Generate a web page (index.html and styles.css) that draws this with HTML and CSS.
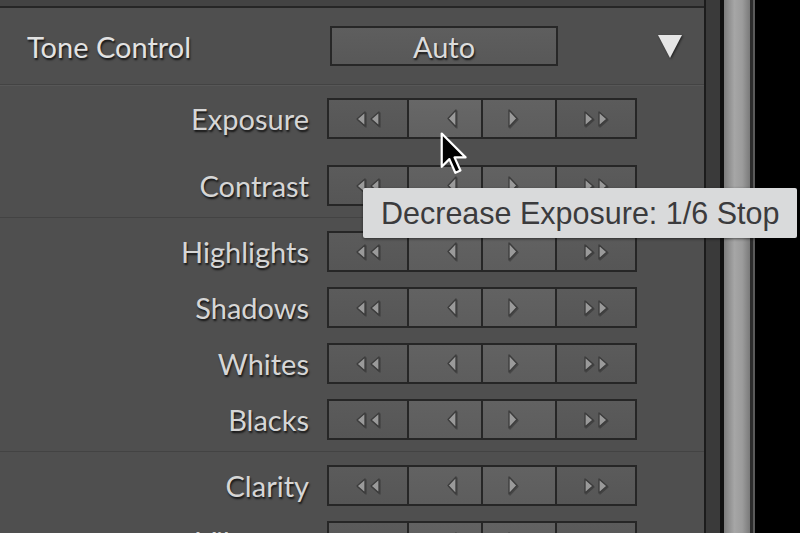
FILE: index.html
```html
<!DOCTYPE html>
<html lang="en">
<head>
    <meta charset="UTF-8" />
    <meta name="viewport" content="width=device-width, initial-scale=1.0" />
    <title>Tone Control</title>
    <link rel="stylesheet" href="styles.css">
</head>
<body>
    <svg class="defs" width="0" height="0">
        <symbol id="ico-ll" viewBox="0 0 28 16">
            <polygon points="11,1 11,15 3,8" />
            <polygon points="25,1 25,15 17,8" />
        </symbol>
        <symbol id="ico-l" viewBox="0 0 13 19">
            <polygon points="11,1 11,18 3,9.5" />
        </symbol>
        <symbol id="ico-r" viewBox="0 0 13 19">
            <polygon points="2,1 2,18 10,9.5" />
        </symbol>
        <symbol id="ico-rr" viewBox="0 0 28 16">
            <polygon points="3,1 3,15 11,8" />
            <polygon points="17,1 17,15 25,8" />
        </symbol>
    </svg>

    <div class="screen">
        <div class="panel">
            <div class="panel-top"></div>
            <div class="panel-head">
                <h2 class="panel-title">Tone Control</h2>
                <button class="auto-btn">Auto</button>
                <svg class="collapse" viewBox="0 0 26 25" width="26" height="25">
                    <polygon points="1,1 25,1 13,24" />
                </svg>
            </div>

            <div class="group">
                <div class="row">
                    <span class="label">Exposure</span>
                    <div class="steps">
                        <button class="step step-big"><svg width="28" height="16"><use href="#ico-ll"/></svg></button>
                        <button class="step step-dec hover"><svg width="13" height="19"><use href="#ico-l"/></svg></button>
                        <button class="step step-inc"><svg width="13" height="19"><use href="#ico-r"/></svg></button>
                        <button class="step step-big"><svg width="28" height="16"><use href="#ico-rr"/></svg></button>
                    </div>
                </div>
                <div class="row row-spaced">
                    <span class="label">Contrast</span>
                    <div class="steps">
                        <button class="step step-big"><svg width="28" height="16"><use href="#ico-ll"/></svg></button>
                        <button class="step step-dec"><svg width="13" height="19"><use href="#ico-l"/></svg></button>
                        <button class="step step-inc"><svg width="13" height="19"><use href="#ico-r"/></svg></button>
                        <button class="step step-big"><svg width="28" height="16"><use href="#ico-rr"/></svg></button>
                    </div>
                </div>
            </div>

            <div class="group">
                <div class="row">
                    <span class="label">Highlights</span>
                    <div class="steps">
                        <button class="step step-big"><svg width="28" height="16"><use href="#ico-ll"/></svg></button>
                        <button class="step step-dec"><svg width="13" height="19"><use href="#ico-l"/></svg></button>
                        <button class="step step-inc"><svg width="13" height="19"><use href="#ico-r"/></svg></button>
                        <button class="step step-big"><svg width="28" height="16"><use href="#ico-rr"/></svg></button>
                    </div>
                </div>
                <div class="row">
                    <span class="label">Shadows</span>
                    <div class="steps">
                        <button class="step step-big"><svg width="28" height="16"><use href="#ico-ll"/></svg></button>
                        <button class="step step-dec"><svg width="13" height="19"><use href="#ico-l"/></svg></button>
                        <button class="step step-inc"><svg width="13" height="19"><use href="#ico-r"/></svg></button>
                        <button class="step step-big"><svg width="28" height="16"><use href="#ico-rr"/></svg></button>
                    </div>
                </div>
                <div class="row">
                    <span class="label">Whites</span>
                    <div class="steps">
                        <button class="step step-big"><svg width="28" height="16"><use href="#ico-ll"/></svg></button>
                        <button class="step step-dec"><svg width="13" height="19"><use href="#ico-l"/></svg></button>
                        <button class="step step-inc"><svg width="13" height="19"><use href="#ico-r"/></svg></button>
                        <button class="step step-big"><svg width="28" height="16"><use href="#ico-rr"/></svg></button>
                    </div>
                </div>
                <div class="row">
                    <span class="label">Blacks</span>
                    <div class="steps">
                        <button class="step step-big"><svg width="28" height="16"><use href="#ico-ll"/></svg></button>
                        <button class="step step-dec"><svg width="13" height="19"><use href="#ico-l"/></svg></button>
                        <button class="step step-inc"><svg width="13" height="19"><use href="#ico-r"/></svg></button>
                        <button class="step step-big"><svg width="28" height="16"><use href="#ico-rr"/></svg></button>
                    </div>
                </div>
            </div>

            <div class="group">
                <div class="row">
                    <span class="label">Clarity</span>
                    <div class="steps">
                        <button class="step step-big"><svg width="28" height="16"><use href="#ico-ll"/></svg></button>
                        <button class="step step-dec"><svg width="13" height="19"><use href="#ico-l"/></svg></button>
                        <button class="step step-inc"><svg width="13" height="19"><use href="#ico-r"/></svg></button>
                        <button class="step step-big"><svg width="28" height="16"><use href="#ico-rr"/></svg></button>
                    </div>
                </div>
                <div class="row">
                    <span class="label">Vibrance</span>
                    <div class="steps">
                        <button class="step step-big"><svg width="28" height="16"><use href="#ico-ll"/></svg></button>
                        <button class="step step-dec"><svg width="13" height="19"><use href="#ico-l"/></svg></button>
                        <button class="step step-inc"><svg width="13" height="19"><use href="#ico-r"/></svg></button>
                        <button class="step step-big"><svg width="28" height="16"><use href="#ico-rr"/></svg></button>
                    </div>
                </div>
            </div>
        </div>
        <div class="rail"></div>
        <div class="scrollbar"></div>
        <div class="gutter"></div>

        <div class="tooltip">Decrease Exposure: 1/6 Stop</div>
        <svg class="pointer" viewBox="0 0 18 27" width="31" height="46">
            <polygon points="1.5,1.5 1.5,21 6,16.5 9.5,24.5 12.5,23.2 9,15.5 15.5,15.5" />
        </svg>
    </div>
</body>
</html>
```

FILE: styles.css
```css
* {
    margin: 0;
    box-sizing: border-box;
}
body {
    background: #000;
    overflow: hidden;
}
.defs {
    position: absolute;
}
.screen {
    position: relative;
    display: flex;
    width: 800px;
    height: 533px;
    overflow: hidden;
    background: #000;
}
.panel {
    width: 706px;
    flex-shrink: 0;
    background: #4f4f4f;
    border-right: 2px solid #1c1c1c;
    font-family: "Lato", sans-serif;
}
.panel-top {
    height: 8px;
    background: #434343;
    border-bottom: 2px solid #262626;
}
.panel-head {
    display: flex;
    align-items: center;
    height: 77px;
    padding-left: 27px;
    border-bottom: 1px solid #434343;
    box-shadow: 0 1px 0 #575757;
}
.panel-title {
    width: 303px;
    font-size: 29px;
    font-weight: normal;
    color: #e2e2e2;
    text-shadow: 1px 2px 2px rgba(0, 0, 0, 0.75);
}
.auto-btn {
    width: 228px;
    height: 40px;
    border: 2px solid #272727;
    background: linear-gradient(#5e5e5e, #585858);
    font-family: "Lato", sans-serif;
    font-size: 29px;
    color: #dcdcdc;
    text-shadow: 1px 2px 2px rgba(0, 0, 0, 0.75);
}
.collapse {
    margin-left: 99px;
    fill: #e6e6e6;
    filter: drop-shadow(1px 1px 1px rgba(0, 0, 0, 0.6));
}
.group {
    display: flex;
    flex-direction: column;
    gap: 15px;
    padding: 13px 0 11px;
    border-bottom: 1px solid #434343;
}
.group .row-spaced {
    margin-top: 11px;
}
.row {
    display: flex;
    align-items: center;
    gap: 18px;
}
.label {
    width: 309px;
    text-align: right;
    font-size: 29px;
    color: #d6d6d6;
    text-shadow: 1px 2px 2px rgba(0, 0, 0, 0.75);
}
.steps {
    display: flex;
    width: 310px;
    height: 41px;
    border: 2px solid #262626;
    background: #262626;
    gap: 2px;
}
.step {
    display: flex;
    align-items: center;
    justify-content: center;
    border: none;
    padding: 0;
    background: linear-gradient(#5b5b5b, #565656);
}
.step-big {
    width: 78px;
}
.step-dec {
    width: 73px;
    justify-content: flex-end;
    padding-right: 23px;
    background: linear-gradient(#626262, #5d5d5d);
}
.step-inc {
    width: 72px;
    justify-content: flex-start;
    padding-left: 24px;
    background: linear-gradient(#626262, #5d5d5d);
}
.step.hover {
    background: linear-gradient(#676767, #616161);
}
.step svg {
    fill: #9a9a9a;
    stroke: #3c3c3c;
    stroke-width: 1.3;
    stroke-linejoin: round;
    filter: drop-shadow(1px 1px 0 rgba(0, 0, 0, 0.25));
}
.rail {
    width: 14px;
    flex-shrink: 0;
    background: #3a3a3a;
    border-right: 4px solid #111;
    box-sizing: content-box;
}
.scrollbar {
    width: 26px;
    flex-shrink: 0;
    background: linear-gradient(90deg, #7c7c7c, #a6a6a6 40%, #9c9c9c 70%, #7a7a7a);
}
.gutter {
    flex: 1;
    background: #000;
    border-left: 3px solid #2c2c2c;
    box-shadow: inset 2px 0 0 #5a5a5a;
}
.tooltip {
    position: absolute;
    left: 363px;
    top: 188px;
    width: 434px;
    height: 50px;
    padding-left: 18px;
    display: flex;
    align-items: center;
    background: #d9dadb;
    border-radius: 2px;
    box-shadow: 0 1px 3px rgba(0, 0, 0, 0.5);
    font-family: "Liberation Sans", sans-serif;
    font-size: 30.5px;
    color: #3b3b3d;
}
.pointer {
    position: absolute;
    left: 439px;
    top: 131px;
    fill: #000;
    stroke: #fff;
    stroke-width: 1.3;
    stroke-linejoin: round;
}
```
